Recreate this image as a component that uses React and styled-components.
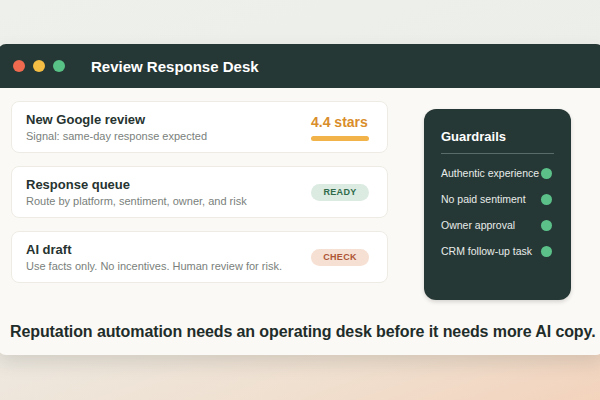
import React from "react";
import styled, { createGlobalStyle } from "styled-components";

const Global = createGlobalStyle`
  html, body { margin: 0; padding: 0; }
  body { width: 600px; height: 400px; overflow: hidden; font-family: "Liberation Sans", Arial, sans-serif;
    background: linear-gradient(160deg, #eef0ec 0%, #eceeea 45%, #f0e0d0 80%, #f3d3bc 100%); }
`;

const Page = styled.div`
  width: 600px; height: 400px; padding-top: 44px; box-sizing: border-box; overflow: hidden;
`;
const Window = styled.div`
  margin-left: -2px; width: 606px; height: 311px; background: #fbf9f5; border-radius: 8px;
  box-shadow: 0 8px 18px rgba(60,70,60,0.15); overflow: hidden; display: flex; flex-direction: column;
`;
const TitleBar = styled.div`
  height: 44px; background: #263835; display: flex; align-items: center; padding-left: 15px; flex-shrink: 0;
`;
const Dot = styled.span`
  width: 12px; height: 12px; border-radius: 50%; background: ${p => p.c}; margin-right: 8px;
`;
const Title = styled.div`
  color: #fff; font-weight: bold; font-size: 15px; margin-left: 18px;
`;
const Body = styled.div`
  display: flex; padding: 13px 0 0 13px; gap: 36px;
`;
const Cards = styled.div`
  width: 377px; display: flex; flex-direction: column; gap: 13px;
`;
const Card = styled.div`
  height: 52px; box-sizing: border-box; background: #fff; border: 1px solid #eeebe4; border-radius: 8px;
  display: flex; align-items: center; justify-content: space-between; padding: 0 18px 0 14px;
`;
const Texts = styled.div` display: flex; flex-direction: column; gap: 3px; `;
const CardTitle = styled.div` font-weight: bold; font-size: 13px; color: #263330; `;
const CardSub = styled.div` font-size: 11px; color: #7a7f7c; `;
const Stars = styled.div` display: flex; flex-direction: column; gap: 6px; width: 58px; `;
const StarText = styled.div` color: #d98d2b; font-weight: bold; font-size: 14px; `;
const Bar = styled.div` height: 5px; border-radius: 3px; background: #f2b34a; `;
const Badge = styled.div`
  width: 58px; height: 17px; border-radius: 9px; background: ${p => p.bg}; color: ${p => p.fg};
  font-size: 9px; font-weight: bold; display: flex; align-items: center; justify-content: center; letter-spacing: 0.3px;
`;
const Panel = styled.div`
  margin-top: 8px; width: 147px; height: 191px; box-sizing: border-box; background: #263835; border-radius: 12px;
  padding: 20px 17px 0 17px; box-shadow: 0 2px 4px rgba(0,0,0,0.15);
`;
const PanelTitle = styled.div` color: #fff; font-weight: bold; font-size: 13px; `;
const Divider = styled.div` height: 1px; background: #5b6b67; margin: 9px 0 6px; `;
const Item = styled.div`
  height: 26px; display: flex; align-items: center; justify-content: space-between; color: #e8ecea; font-size: 10.5px;
  white-space: nowrap; padding-right: 2px;
`;
const Green = styled.span` width: 11px; height: 11px; border-radius: 50%; background: #5bc189; flex-shrink: 0; `;
const Footer = styled.div`
  margin-top: auto; padding: 0 0 14px 12px; font-weight: bold; font-size: 16px; color: #1f2d2a; white-space: nowrap;
  letter-spacing: -0.1px;
`;

export default function App() {
  return (
    <Page>
      <Global />
      <Window>
        <TitleBar>
          <Dot c="#ef6a4f" /><Dot c="#f4bd43" /><Dot c="#58c185" />
          <Title>Review Response Desk</Title>
        </TitleBar>
        <Body>
          <Cards>
            <Card>
              <Texts><CardTitle>New Google review</CardTitle><CardSub>Signal: same-day response expected</CardSub></Texts>
              <Stars><StarText>4.4 stars</StarText><Bar /></Stars>
            </Card>
            <Card>
              <Texts><CardTitle>Response queue</CardTitle><CardSub>Route by platform, sentiment, owner, and risk</CardSub></Texts>
              <Badge bg="#dcebe2" fg="#2f6a4a">READY</Badge>
            </Card>
            <Card>
              <Texts><CardTitle>AI draft</CardTitle><CardSub>Use facts only. No incentives. Human review for risk.</CardSub></Texts>
              <Badge bg="#f6e0d3" fg="#ad5535">CHECK</Badge>
            </Card>
          </Cards>
          <Panel>
            <PanelTitle>Guardrails</PanelTitle>
            <Divider />
            {["Authentic experience", "No paid sentiment", "Owner approval", "CRM follow-up task"].map(t => (
              <Item key={t}>{t}<Green /></Item>
            ))}
          </Panel>
        </Body>
        <Footer>Reputation automation needs an operating desk before it needs more AI copy.</Footer>
      </Window>
    </Page>
  );
}
